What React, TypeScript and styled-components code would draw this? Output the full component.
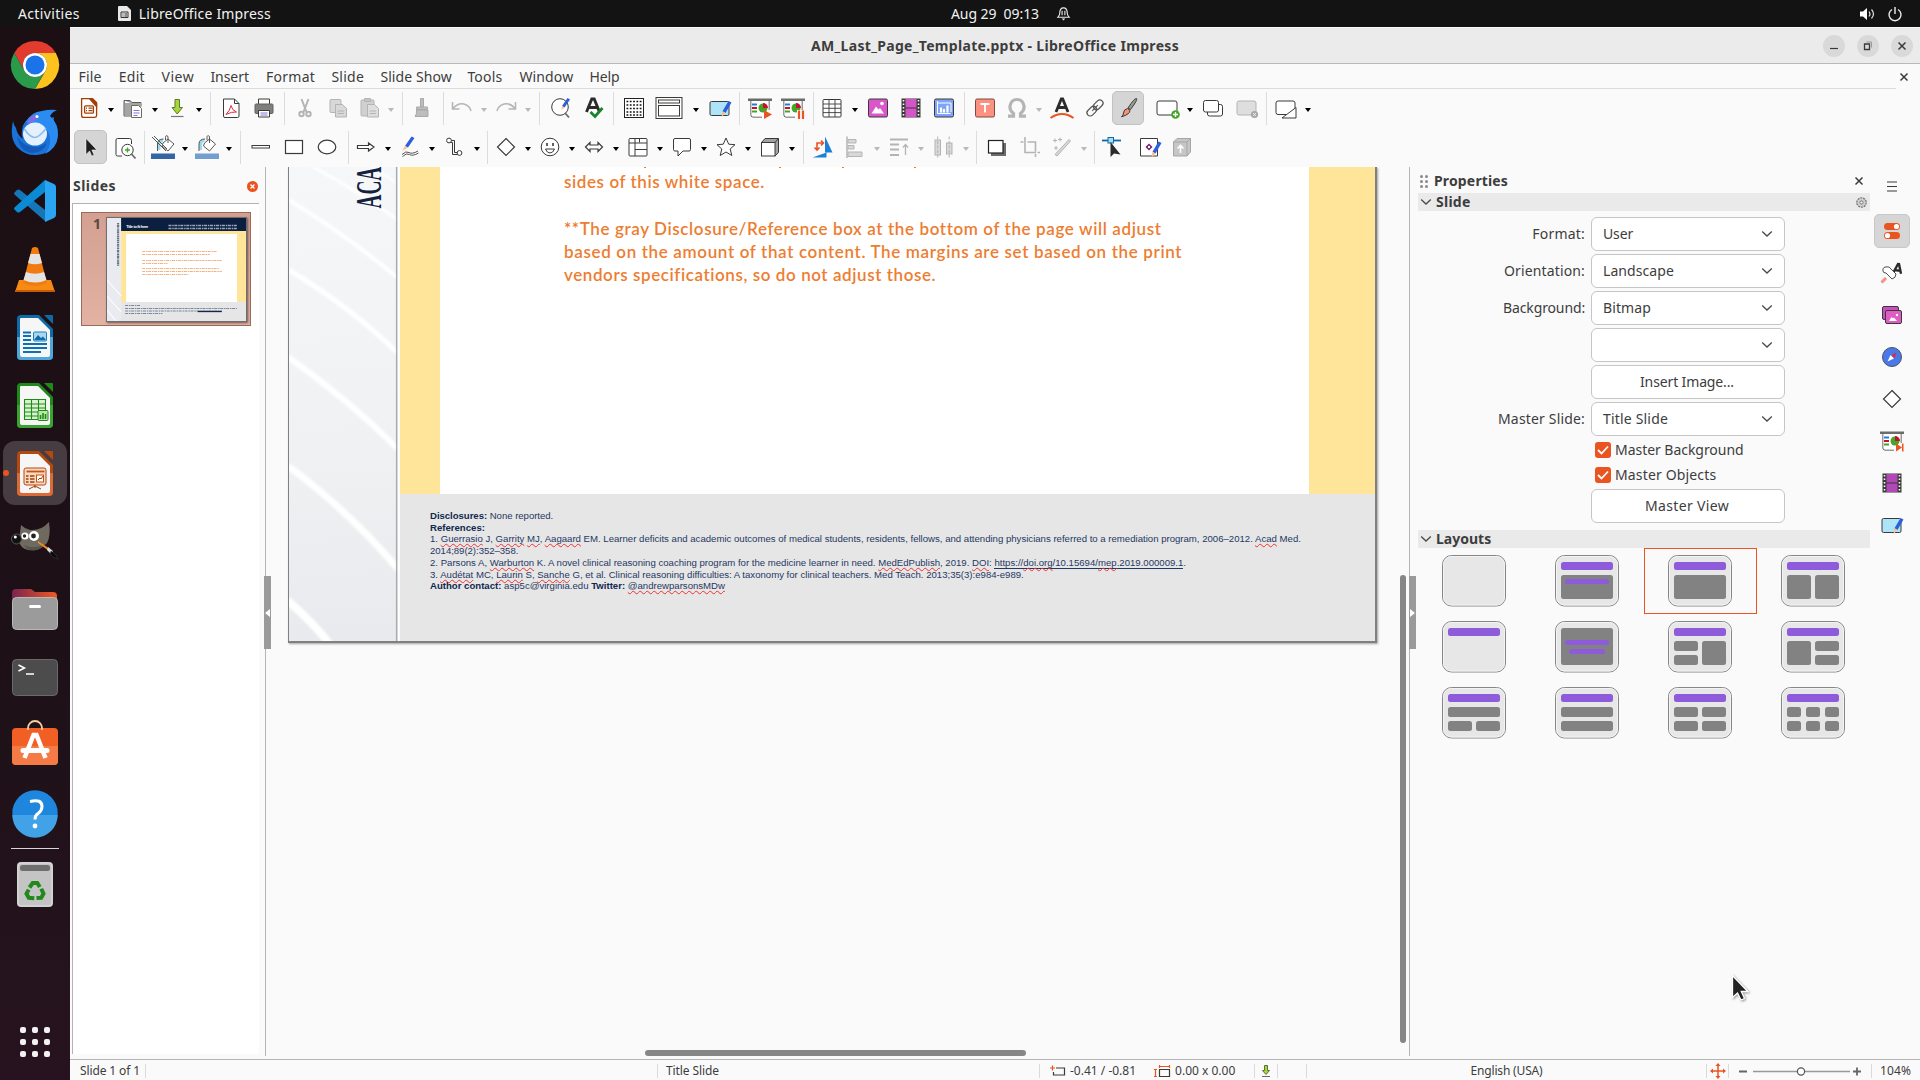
import React from "react";
import styled, { createGlobalStyle } from "styled-components";

const UI = `"Noto Sans", "Open Sans", sans-serif`;
const INK = "#3a3a38";
const DIM = "#b4b4b4";
const ORANGE = "#e95420";

const Global = createGlobalStyle`
  html, body { margin: 0; padding: 0; }
  body { background: #fafafa; overflow: hidden; }
  *, *::before, *::after { box-sizing: border-box; }
`;

/* ---------- shell ---------- */

const Screen = styled.div`
  width: 1920px;
  height: 1080px;
  display: flex;
  flex-direction: column;
  overflow: hidden;
  background: #fafafa;
  color: #3d3d3d;
  font: 14px/18px ${UI};
`;
const Text = styled.span<{ $ls?: number; $bold?: boolean }>`
  white-space: pre;
  letter-spacing: ${(p) => p.$ls ?? 0}px;
  font-weight: ${(p) => (p.$bold ? 700 : 400)};
`;
const Svg = styled.svg`
  display: block;
  flex: none;
  overflow: visible;
`;

const TopBar = styled.header`
  flex: none;
  height: 27px;
  display: grid;
  grid-template-columns: 1fr auto 1fr;
  align-items: center;
  background: #131313;
  color: #f2f2f2;
`;
const TopLeft = styled.div`
  display: flex;
  align-items: center;
  padding-left: 18px;
`;
const AppMark = styled.div`
  display: flex;
  align-items: center;
  gap: 8px;
  margin-left: 38px;
`;
const Clock = styled.div`
  display: flex;
  align-items: center;
  gap: 18px;
  padding-left: 101px;
`;
const Tray = styled.div`
  display: flex;
  justify-content: flex-end;
  align-items: center;
  gap: 13px;
  padding-right: 18px;
`;
const Desktop = styled.div`
  flex: 1;
  min-height: 0;
  display: flex;
`;

/* ---------- dock ---------- */

const Dock = styled.nav`
  flex: none;
  width: 70px;
  display: flex;
  flex-direction: column;
  align-items: center;
  padding-top: 6px;
  background: linear-gradient(180deg, #1b0f14 0%, #1d1117 60%, #27131f 100%);
`;
const DockSlot = styled.div<{ $active?: boolean; $lift?: number }>`
  position: relative;
  flex: none;
  width: 64px;
  height: 64px;
  margin-bottom: 4px;
  padding-bottom: ${(p) => (p.$lift ?? 0) * 2}px;
  display: flex;
  align-items: center;
  justify-content: center;
  border-radius: 12px;
  background: ${(p) => (p.$active ? "#463c41" : "transparent")};
`;
const RunningDot = styled.i`
  position: absolute;
  left: 0;
  top: 29px;
  width: 6px;
  height: 6px;
  border-radius: 50%;
  background: ${ORANGE};
`;
const DockRule = styled.div`
  width: 48px;
  height: 1px;
  margin: -1px 0 3px;
  background: #d8d4d6;
`;
const AppGrid = styled.div`
  margin-top: auto;
  margin-bottom: 23px;
  display: grid;
  grid-template-columns: repeat(3, 6px);
  gap: 6px;
`;
const AppDot = styled.i`
  width: 6px;
  height: 6px;
  border-radius: 2px;
  background: #f3f1f2;
`;

/* ---------- window chrome ---------- */

const Window = styled.main`
  flex: 1;
  min-width: 0;
  display: flex;
  flex-direction: column;
`;
const TitleBar = styled.div`
  flex: none;
  height: 37px;
  display: grid;
  grid-template-columns: 1fr auto 1fr;
  align-items: center;
  background: #ebebeb;
  border-top: 1px solid #f7f7f7;
  border-bottom: 1px solid #b9b9b9;
`;
const Controls = styled.div`
  grid-column: 3;
  display: flex;
  justify-content: flex-end;
  gap: 12px;
  padding-right: 7px;
`;
const Control = styled.span`
  width: 22px;
  height: 22px;
  border-radius: 50%;
  display: flex;
  align-items: center;
  justify-content: center;
  background: #d9d9d9;
`;
const MenuBar = styled.div`
  flex: none;
  height: 25px;
  display: flex;
  align-items: stretch;
`;
const Menus = styled.div`
  flex: 1;
  display: flex;
  align-items: center;
  padding: 2px 0 0 8.5px;
  border-bottom: 1px solid #dcdcdc;
`;
const MenuItem = styled.span<{ $w: number; $ls: number }>`
  width: ${(p) => p.$w}px;
  letter-spacing: ${(p) => p.$ls}px;
  white-space: nowrap;
`;
const DocClose = styled.span`
  width: 24px;
  display: flex;
  align-items: center;
  padding-left: 4px;
`;
const ToolRow = styled.div<{ $indent: number }>`
  flex: none;
  height: 39px;
  display: flex;
  align-items: center;
  padding: 0 0 1px ${(p) => p.$indent}px;
`;
const Tool = styled.span<{ $w: number; $on?: boolean }>`
  flex: none;
  width: ${(p) => p.$w}px;
  height: 34px;
  display: flex;
  align-items: center;
  justify-content: center;
  border-radius: 5px;
  border: 1px solid ${(p) => (p.$on ? "#c2c2c2" : "transparent")};
  background: ${(p) => (p.$on ? "#d5d5d5" : "transparent")};
`;
const Caret = styled.span<{ $w: number; $dim?: boolean }>`
  flex: none;
  width: ${(p) => p.$w}px;
  display: flex;
  justify-content: center;
  padding-top: 4px;
  &::after {
    content: "";
    border: 3.5px solid transparent;
    border-bottom-width: 0;
    border-top: 4px solid ${(p) => (p.$dim ? "#b9b9b9" : "#000")};
  }
`;
const Rule = styled.i<{ $a: number; $b: number }>`
  flex: none;
  width: 1px;
  height: 33px;
  margin: 0 ${(p) => p.$b}px 0 ${(p) => p.$a}px;
  background: #dcdcdc;
`;

/* ---------- workspace ---------- */

const Work = styled.div`
  flex: 1;
  min-height: 0;
  display: flex;
`;
const SlidePane = styled.section`
  flex: none;
  width: 195px;
  padding: 0 6px 5px 2px;
  display: flex;
  flex-direction: column;
`;
const PaneHead = styled.div`
  height: 36px;
  display: flex;
  align-items: center;
  justify-content: space-between;
  padding: 2px 1px 0 1px;
`;
const SlideList = styled.div`
  flex: 1;
  padding: 8px 8px;
  background: #fff;
  border-left: 1px solid #b3b3b3;
  border-top: 1px solid #b3b3b3;
`;
const Thumb = styled.div`
  width: 170px;
  height: 114px;
  display: flex;
  justify-content: space-between;
  padding: 4px 3px 0 11px;
  border: 1px solid #9a6a5c;
  background: linear-gradient(#d3a091, #e2b2a2);
`;
const ThumbNo = styled.b`
  width: 10px;
  font-size: 14px;
  line-height: 13px;
  color: #5a4742;
`;
const ThumbArt = styled.svg`
  width: 141px;
  height: 105px;
  border: 1px solid #6e6e6e;
  box-shadow: 1px 1px 2px rgba(0, 0, 0, 0.5);
`;
const Splitter = styled.div`
  position: relative;
  flex: none;
  width: 1px;
  margin-bottom: 3px;
  background: #b5b5b5;
`;
const Grip = styled.span<{ $x: number }>`
  position: absolute;
  z-index: 2;
  left: ${(p) => p.$x}px;
  top: 409px;
  width: 7px;
  height: 73px;
  display: flex;
  align-items: center;
  justify-content: center;
  background: #9a9a9a;
`;
const Canvas = styled.section`
  position: relative;
  flex: 1;
  min-width: 0;
  overflow: hidden;
`;
const Slide = styled.div`
  position: absolute;
  left: 22px;
  top: 0;
  width: 1089px;
  height: 476px;
  display: flex;
  background: #fff;
  border: solid #808080;
  border-width: 0 2px 2px 1px;
  box-shadow: 1px 1px 2px rgba(0, 0, 0, 0.35);
`;
const SideArt = styled.svg`
  display: block;
  flex: none;
  width: 111px;
  height: 474px;
`;
const SlideBody = styled.div`
  flex: 1;
  display: flex;
  flex-direction: column;
`;
const Middle = styled.div`
  height: 327px;
  display: flex;
  padding: 0 67px 0 40px;
  background: linear-gradient(90deg, #ffe599 40px, #fff 40px, #fff 909px, #ffe599 909px);
`;
const Copy = styled.div`
  padding: 1px 0 0 124px;
  display: flex;
  flex-direction: column;
  color: #ed7d31;
  font: 600 17px/23.3px Lato, sans-serif;
`;
const Stubs = styled.svg`
  display: block;
  height: 2px;
  width: 600px;
  margin-top: -1px;
  margin-bottom: 1px;
`;
const CopyLine = styled.p<{ $ls: number }>`
  margin: 0;
  min-height: 23.3px;
  white-space: nowrap;
  letter-spacing: ${(p) => p.$ls}px;
`;
const Foot = styled.div`
  flex: 1;
  padding: 15.8px 0 0 30px;
  background: #e6e6e6;
  color: #1f3864;
  font: 9.6px/11.7px "Liberation Sans", Arial, sans-serif;
`;
const FootLine = styled.p<{ $ls?: number }>`
  margin: 0;
  white-space: nowrap;
  letter-spacing: ${(p) => p.$ls ?? 0}px;
  b { color: #10284f; }
`;
const Typo = styled.span`
  text-decoration: underline wavy #f03030 0.6px;
  text-underline-offset: 1px;
  text-decoration-skip-ink: none;
`;
const Link = styled.span`
  border-bottom: 1px solid #1f3864;
  display: inline-block;
  line-height: 10px;
`;
const VBar = styled.i`
  position: absolute;
  right: 3px;
  top: 408px;
  width: 6px;
  height: 468px;
  border-radius: 3px;
  background: #868686;
`;
const HBar = styled.i`
  position: absolute;
  left: 379px;
  bottom: 3px;
  width: 381px;
  height: 6px;
  border-radius: 3px;
  background: #868686;
`;

/* ---------- sidebar ---------- */

const Sidebar = styled.aside`
  flex: none;
  width: 460px;
  padding: 5px 0 0 8px;
  display: flex;
  flex-direction: column;
`;
const DeckHead = styled.div`
  height: 21px;
  display: flex;
  align-items: center;
  padding: 0 7px 3px 2px;
`;
const DotGrid = styled.span`
  display: grid;
  grid-template-columns: 3px 3px;
  gap: 2px;
  margin-right: 6px;
  i {
    width: 3px;
    height: 3px;
    border-radius: 50%;
    background: #8a8a8a;
  }
`;
const Push = styled.span`
  margin-left: auto;
`;
const SectionHead = styled.div`
  flex: none;
  width: 452px;
  height: 18px;
  display: flex;
  align-items: center;
  gap: 4px;
  padding: 0 3px 0 2px;
  background: #eaeaea;
`;
const Form = styled.div`
  display: grid;
  grid-template-columns: 167px 194px;
  column-gap: 6px;
  row-gap: 3px;
  align-items: center;
  padding: 6px 0 7px;
`;
const FieldLabel = styled.span<{ $ls: number }>`
  text-align: right;
  letter-spacing: ${(p) => p.$ls}px;
`;
const Combo = styled.div`
  grid-column: 2;
  height: 34px;
  display: flex;
  align-items: center;
  justify-content: space-between;
  padding: 0 11px 0 11px;
  border: 1px solid #c6c6c6;
  border-radius: 6px;
  background: #fff;
`;
const Button = styled(Combo)`
  justify-content: center;
  padding-right: 13px;
`;
const Checks = styled.div`
  grid-column: 2;
  height: 47px;
  display: flex;
  flex-direction: column;
  justify-content: center;
  gap: 7px;
  padding: 0 0 0 4px;
`;
const Check = styled.div`
  display: flex;
  align-items: center;
  gap: 4px;
  height: 18px;
`;
const Box = styled.span`
  width: 16px;
  height: 16px;
  border-radius: 3px;
  display: flex;
  align-items: center;
  justify-content: center;
  background: ${ORANGE};
`;
const Layouts = styled.div`
  display: grid;
  grid-template-columns: repeat(4, 113px);
  grid-auto-rows: 66px;
`;
const LayoutCell = styled.div<{ $on?: boolean }>`
  display: flex;
  justify-content: center;
  padding: 6px 2px 0 0;
  border: 1px solid ${(p) => (p.$on ? ORANGE : "transparent")};
`;
const Tabs = styled.nav`
  flex: none;
  width: 50px;
  padding: 5px 6px 0 0;
  display: flex;
  flex-direction: column;
  align-items: center;
  gap: 8px;
`;
const Tab = styled.span<{ $on?: boolean }>`
  flex: none;
  width: 36px;
  height: 34px;
  display: flex;
  align-items: center;
  justify-content: center;
  border-radius: 5px;
  border: 1px solid ${(p) => (p.$on ? "#c8c8c8" : "transparent")};
  background: ${(p) => (p.$on ? "#d6d6d6" : "transparent")};
`;

/* ---------- status bar ---------- */

const Status = styled.footer`
  flex: none;
  height: 21px;
  display: flex;
  align-items: center;
  padding-top: 1px;
  border-top: 1px solid #b5b5b5;
  font-size: 12px;
`;
const Cell = styled.div<{ $w: number; $pl?: number; $center?: boolean; $gap?: number; $line?: boolean }>`
  flex: none;
  width: ${(p) => p.$w}px;
  height: 14px;
  display: flex;
  align-items: center;
  justify-content: ${(p) => (p.$center ? "center" : "flex-start")};
  gap: ${(p) => p.$gap ?? 0}px;
  padding-left: ${(p) => p.$pl ?? 0}px;
  border-right: 1px solid ${(p) => (p.$line === false ? "transparent" : "#dadada")};
`;
const Pointer = styled.svg`
  position: absolute;
  left: 1731px;
  top: 974px;
  filter: drop-shadow(1px 1px 1px rgba(0, 0, 0, 0.4));
`;

/* ---------- small glyphs ---------- */

const Cross = ({ s = 8, c = INK }: { s?: number; c?: string }) => (
  <Svg width={s} height={s} viewBox="0 0 8 8"><path d="M.5 .5l7 7M7.5 .5l-7 7" stroke={c} strokeWidth="1.5" /></Svg>
);
const Chevron = () => (
  <Svg width="12" height="8" viewBox="0 0 12 8"><path d="M1.2 1.5L6 6l4.800-4.500" fill="none" stroke="#4a4a4a" strokeWidth="1.300" /></Svg>
);
const Tick = () => (
  <Svg width="12" height="10" viewBox="0 0 12 10"><path d="M1 5l3.500 3.500L11 1.500" fill="none" stroke="#fff" strokeWidth="1.800" /></Svg>
);

const Pencil = () => (
  <>
    <path d="M20.500 5l3 1.500-6 10.500-3-1.700z" fill="#2c5fde" />
    <path d="M14.500 15.300l3 1.700-4 4.200z" fill="#fcc08a" />
  </>
);
const Board = () => (
  <>
    <path d="M3 5v14q0 2 2 2h9M21 5v9" fill="#fff" stroke={INK} />
    <path d="M3.500 5h17v15.500H5q-1.500 0-1.500-1.500z" fill="#fff" />
    <path d="M0 2.500h24v2.500H0z" fill="#6b6b6b" />
    <path d="M4 8.500h5" stroke="#1e7fd6" strokeWidth="2" />
    <path d="M4 12h5" stroke="#c8102e" strokeWidth="2" />
    <path d="M4 15.500h5" stroke="#43a628" strokeWidth="2" />
    <circle cx="15" cy="12" r="4.500" fill="#43a628" />
    <path d="M15 12V7a5 5 0 0 1 5 5z" fill="#c8102e" />
  </>
);
const Bucket = () => (
  <g fill="none" stroke="#565654">
    <path d="M12 8l5-4 6 5-6 7-6-5z" fill="#fff" />
    <path d="M17 8V1.500q-2.500-2-2.500 1V5" />
    <path d="M12 5.500q-4 0-4 4V15" stroke="#9ed8ea" strokeWidth="3" />
    <path d="M12.500 4q-6 0-6 5v7" />
  </g>
);

const icons: Record<string, React.ReactNode> = {
  fresh: (<g fill="none" stroke="#a33e03" strokeWidth="1.300"><path d="M4.600 2.600h10l5 5v12q0 1.800-1.800 1.800H6.400q-1.800 0-1.800-1.800z" fill="#fff" /><path d="M12.500 2.600h3l4 4v4z" fill="#a33e03" /><rect x="7.600" y="9.800" width="8.800" height="7.400" rx="1" /><path d="M9 12.200h1m1.500 0h4M9 14.600h1m1.500 0h4" /></g>),
  open: (<g><path d="M3 4.500h6l2 2h9v4M3 4.500V20h7" fill="#9b9b99" stroke="#5c5c5a" /><path d="M3.500 7H20v13H3.500z" fill="#a5a5a3" /><path d="M10.500 9.500h7l3 3v9h-10z" fill="#fff" stroke="#6a6a68" /><path d="M12.500 14.500h6m-6 2.500h6m-6 2.500h4" stroke="#8279d8" strokeWidth="1.100" /></g>),
  save: (<g><path d="M10 3.500h4.500v8h3L12.200 18 7 11.500h3z" fill="#a4d83a" stroke="#5f7a2a" /><path d="M6 20.500h12.500" stroke="#777" strokeWidth="1.200" /></g>),
  pdf: (<g fill="none"><path d="M4.500 3h11l4.500 4.500V20q0 1.500-1.500 1.500H6q-1.500 0-1.500-1.500z" fill="#fff" stroke={INK} /><path d="M15.500 3v4.500H20" stroke={INK} /><path d="M7 18.500q4-4 5-9 1 5 5.500 6.500-5-.5-10.500 2.500z" stroke="#e2283c" /></g>),
  print: (<g><path d="M6.500 8V3h11v5" fill="#fff" stroke={INK} /><rect x="3" y="8" width="18" height="9.500" rx="1" fill="#7f7f7d" stroke="#626260" /><path d="M6.500 14.500h11V21h-11z" fill="#fff" stroke={INK} /><path d="M8.500 17h7m-7 2h7" stroke="#8279d8" /></g>),
  cut: (<g fill="none" stroke={DIM} strokeWidth="2"><path d="M8.500 3l5 13M15.500 3l-5 13" /><circle cx="8.500" cy="18" r="2.200" /><circle cx="15.500" cy="18" r="2.200" /></g>),
  copy: (<g fill="#d8d8d8" stroke={DIM}><rect x="4" y="3.500" width="11" height="13" rx="1" /><path d="M9.500 8.500h7l4 4v8.500h-11z" /><path d="M11.500 15h6.500m-6.500 2.500h6.500" /></g>),
  paste: (<g fill="#d0d0d0" stroke={DIM}><rect x="3" y="4" width="13" height="16" rx="1" /><path d="M6.500 2.500h6v3h-6z" fill="#c4c4c4" /><path d="M9.500 8.500h7l4 4v8.500h-11z" fill="#dedede" /><path d="M11.500 15h6.500m-6.500 2.500h6.500" /></g>),
  clone: (<g fill="#bdbdbd" stroke="#a9a9a9"><path d="M10.500 2.500h3v8h-3z" /><path d="M6.500 11h11v2.500h-11z" /><path d="M6.500 14h11.500v6.500H5q2-2 1.500-6.500z" /></g>),
  undo: (<path d="M2.500 6v7h7M3 12.500Q8 6.500 14 8q6 2 7 7" fill="none" stroke={DIM} strokeWidth="1.500" />),
  redo: (<path d="M21.500 6v7h-7M21 12.500Q16 6.500 10 8q-6 2-7 7" fill="none" stroke={DIM} strokeWidth="1.500" />),
  find: (<g fill="none"><circle cx="11" cy="11" r="8.300" fill="#fff" stroke={INK} /><path d="M16 17l4 4.500" stroke="#6a6a68" strokeWidth="1.800" /><path d="M18.500 2l2.500 1.500-5.500 8-2.500-1.500z" fill="#2c5fde" /><path d="M13 10l2.500 1.500-3 2.500z" fill="#fcc08a" /></g>),
  spell: (<g fill="none"><path d="M4.500 16L9.800 3h2.400l5.300 13M6.500 11.500h9" stroke="#2b2b2a" strokeWidth="2.900" /><path d="M8.500 16l4.500 4.500L20.500 12" stroke="#15832c" strokeWidth="2.700" /></g>),
  grid: (<g><rect x="2.500" y="2.500" width="19" height="19" fill="#fff" stroke="#222" />{[5.500, 9, 12.500, 16, 19].map((y) => <path key={y} d={`M4.500 ${y}h15`} stroke="#111" strokeWidth="1.600" strokeDasharray="1.800 1.500" />)}</g>),
  views: (<g fill="#fff" stroke={INK}><rect x="-1" y="1.500" width="26" height="21" /><rect x="1.500" y="4" width="21" height="3" /><rect x="1.500" y="9.500" width="21" height="10.500" /></g>),
  master: (<g><rect x="2" y="5.500" width="19" height="14" rx="1.500" fill="#aee4f8" stroke={INK} /><Pencil /></g>),
  start: (<g><Board /><path d="M16 14l8 4.500-8 4.500z" fill={ORANGE} /></g>),
  startHere: (<g><Board /><path d="M16 14h7v9h-7z" fill="#fff" /><path d="M18 14.500V23M22 14.500V23" stroke={ORANGE} strokeWidth="2.200" /></g>),
  table: (<g fill="#fff" stroke={INK}><rect x="3" y="3.500" width="18" height="17.500" rx="1" /><path d="M3 8h18M3 12.300h18M3 16.600h18M9 3.500v17.500M15 3.500v17.500" fill="none" strokeWidth=".9" /></g>),
  image: (<g><rect x="2.500" y="3" width="19" height="18" rx="1.500" fill="#d957ca" stroke={INK} /><path d="M5.500 17.500l4.500-7 2.500 3 1.500-1.500 4 5.500z" fill="#fff" /><circle cx="16" cy="7.500" r="1.800" fill="#fff" /></g>),
  film: (<g><rect x="2.500" y="2.500" width="19" height="19" fill={INK} /><path d="M6.500 3h11v8.500h-11zM6.500 12.500h11V21h-11z" fill="#d455c8" /><path d="M4.500 4v17M19.500 4v17" stroke="#fff" strokeWidth="1.600" strokeDasharray="1.500 2" /></g>),
  reel: (<g><rect x="2.500" y="2.500" width="19" height="19" fill={INK} /><path d="M6.500 3h11v8.500h-11zM6.500 12.500h11V21h-11z" fill="#b248b8" /><path d="M4.500 4v17M19.500 4v17" stroke="#fff" strokeWidth="1.600" strokeDasharray="1.500 2" /></g>),
  chart: (<g><rect x="2.500" y="3" width="19" height="18" rx="1.500" fill="#7ea4f8" stroke={INK} /><path d="M5.500 5v12.500h13M5 7h14v9" fill="none" stroke="#fff" strokeWidth="1" /><path d="M9 16.500v-5M12 16.500V13M15.500 16.500V9.500" stroke="#fff" strokeWidth="2.200" /></g>),
  textbox: (<g><rect x="2.500" y="3" width="19" height="18" rx="1.500" fill="#fc9181" stroke="#7d4a43" /><path d="M7.500 8h9M12 8v8.500" stroke="#fff" strokeWidth="1.900" /></g>),
  omega: (<path d="M3 20.200h5.500v-2.700q-4-3-3.500-7.500 1-6.500 7-6.500t7 6.500q.5 4.500-3.500 7.500v2.700H21" fill="none" stroke={DIM} strokeWidth="3.200" />),
  fontwork: (<g fill="none"><path d="M6 16L11.300 3h1.400L18 16M8 11.500h8" stroke="#2b2b2a" strokeWidth="2.800" /><path d="M.5 22q11.500-8 23 0" stroke={ORANGE} strokeWidth="2" /></g>),
  link: (<g fill="none" stroke="#555553" strokeWidth="1.200" transform="rotate(-45 12 12)"><rect x="2" y="8.800" width="11" height="6.400" rx="3.200" /><rect x="11" y="8.800" width="11" height="6.400" rx="3.200" /><path d="M8 12h8" /></g>),
  brush: (<g><path d="M20.500 2.500q1.500 1-6 11l-2.500-1.500q6.500-10 8.500-9.500z" fill="#9b9b99" stroke={INK} /><path d="M11.500 12.500l2.500 1.800q0 4-8.500 6.500 2-1.500 2-3.800 0-3.500 4-4.500z" fill="#fb8f76" stroke={INK} /></g>),
  newSlide: (<g><rect x="1" y="5" width="20" height="14" rx="2" fill="#fff" stroke={INK} /><circle cx="19.500" cy="18.500" r="4.300" fill="#43a628" /><path d="M17 18.500h5M19.500 16v5" stroke="#fff" strokeWidth="1.300" /></g>),
  dup: (<g fill="#fff" stroke={INK}><rect x="6.500" y="8.500" width="15" height="11.500" rx="2" /><rect x="2.500" y="4.500" width="15" height="11.500" rx="2" /></g>),
  del: (<g><rect x="2" y="5" width="19" height="14" rx="2" fill="#dedede" stroke={DIM} /><circle cx="19.500" cy="18.500" r="3.600" fill="#a8a8a8" /><path d="M18.200 17.200l2.600 2.600m0-2.600l-2.600 2.600" stroke="#fff" /></g>),
  layout: (<g><rect x="2" y="5" width="19" height="13.500" rx="2" fill="#fff" stroke={INK} /><path d="M22 11.500V22H8z" fill="#fff" stroke={INK} /></g>),

  select: (<path d="M8 3.500v16l3.600-3.600 2.200 5 2.200-1-2.200-5h5z" fill="#1e1e1e" stroke="#fff" strokeWidth=".5" />),
  zoomer: (<g fill="none"><path d="M18.500 9V5.500q0-2-2-2h-12q-1.500 0-1.500 1.500v14.500q0 1.500 1.500 1.500H9" stroke={INK} fill="#fff" /><circle cx="14.500" cy="15" r="5.700" fill="#fff" stroke={INK} /><path d="M12 15h5M14.500 12.500v5" stroke="#43a628" strokeWidth="1.400" /><path d="M18.500 19l4 4.500" stroke="#6a6a68" strokeWidth="1.800" /></g>),
  lineColor: (<g><Bucket /><path d="M1 2l14 14M3 1l13 13" stroke="#565654" /><path d="M0 18.500h24V24H0z" fill="#3465a4" /></g>),
  fillColor: (<g><g transform="translate(-2.500 0)"><Bucket /></g><path d="M0 18.500h24V24H0z" fill="#729fcf" /></g>),
  line: (<rect x="3" y="10.500" width="17.500" height="2.500" fill="#fff" stroke={INK} />),
  rect: (<rect x="3.500" y="5.500" width="17" height="13" fill="#fff" stroke={INK} strokeWidth="1.200" />),
  ellipse: (<ellipse cx="12" cy="12" rx="8.800" ry="6.800" fill="#fff" stroke={INK} strokeWidth="1.200" />),
  arrow: (<path d="M3.500 10.500h11V8l5.500 4-5.500 4v-2.500h-11z" fill="#fff" stroke={INK} strokeWidth="1.200" />),
  scribble: (<g fill="none"><path d="M13.500 1.500l3 1.500-6.500 9.500-3-1.500z" fill="#2c5fde" /><path d="M7 11l3 1.500L4 16z" fill="#fcc08a" /><path d="M4 19.500q4-4 7-2t9-1.500M4.500 21.500q4-4 7-2t9-1.500" stroke="#565654" /></g>),
  connector: (<g fill="#fff" stroke={INK}><path d="M8 5.500h4.500v12H17M6 7.500h4.500v12H17" fill="none" /><circle cx="7" cy="5.500" r="2.400" /><circle cx="17.500" cy="18" r="2.400" /></g>),
  diamond: (<path d="M12 3.500l8.500 8.500-8.500 8.500L3.500 12z" fill="#fff" stroke={INK} strokeWidth="1.200" />),
  smiley: (<g fill="none" stroke={INK}><circle cx="12" cy="12" r="8.800" fill="#fff" /><path d="M9 8v3M15 8v3" strokeWidth="1.600" /><path d="M7.500 14h9q-1.500 4-4.500 4t-4.500-4z" /></g>),
  dblArrow: (<path d="M3.500 12L8 7.500V10h8V7.500l4.500 4.500-4.500 4.500V14H8v2.500z" fill="#fff" stroke={INK} strokeWidth="1.200" />),
  flow: (<g fill="#fff" stroke={INK}><rect x="3" y="3.500" width="18" height="17.500" rx="1" /><path d="M9 3.500v17.500M13.500 3.500v4M3 8h18M9 14.500h12" /></g>),
  callout: (<path d="M5 3.500h14q1.500 0 1.500 1.500v9.500q0 1.500-1.500 1.500h-6l-5 5v-5H5q-1.500 0-1.500-1.500V5q0-1.500 1.500-1.500z" fill="#fff" stroke={INK} />),
  star: (<path d="M12 3l2.700 6.200 6.300.5-4.800 4.300 1.600 6.500-5.800-3.500-5.800 3.500 1.600-6.500L3 9.700l6.300-.5z" fill="#fff" stroke={INK} />),
  cube: (<g stroke={INK}><path d="M3.500 7.500L7 3.500h13.500v14L17 21" fill="#a3a3a1" /><path d="M17 7.500l3.500-4" /><rect x="3.500" y="7.500" width="13.500" height="13.500" fill="#fff" /></g>),
  rotate: (<g fill="none"><path d="M14 1.500l7.500 16H14zM1.500 22.500l14-5v5z" fill="#1e7fd6" /><path d="M6 14.500V8h6M3.500 12.500L6 15l2.500-2.500M10 5.500L12.500 8 10 10.500" stroke={ORANGE} strokeWidth="1.600" /></g>),
  align: (<g fill="#d8d8d8" stroke={DIM}><path d="M4 1.500v21.500" strokeWidth="1.500" /><path d="M5 4.500h8v3.500H5zM5 10.500h6v3.500H5zM5 17h14v4.500H5z" /></g>),
  arrange: (<g stroke={DIM} strokeWidth="1.800" fill="none"><path d="M3 4.500h18M3 9.500h9M3 14.500h9M3 20h9" /><path d="M18.500 20V10M16 12.500l2.500-3 2.500 3" strokeWidth="1.300" /></g>),
  spread: (<g fill="#d8d8d8" stroke={DIM}><rect x="3" y="5" width="5.500" height="15" /><rect x="14.500" y="8" width="5.500" height="11" /><path d="M5.700 1.500V23M17.200 1.500V23" strokeDasharray="3 1.500" fill="none" /></g>),
  shadow: (<g><rect x="6" y="8" width="15" height="13" fill="#6b6b69" /><rect x="3.500" y="5.500" width="14.500" height="12.500" fill="#fff" stroke="#222" strokeWidth="1.200" /></g>),
  crop: (<path d="M7 2v15.500h11M2.500 7h3M9.500 7h8v9.500M17.500 19v3M19.500 17.500h2.500" fill="none" stroke={DIM} strokeWidth="1.600" />),
  wand: (<g fill="none" stroke={DIM}><path d="M19 4.500l1.500 1.500L7 21l-2-1.500z" fill="#d8d8d8" /><path d="M5 3.500v4M3 5.500h4M10 2.500v4M8 4.500h4M6 11v4M4 13h4" /></g>),
  points: (<g><path d="M1 5.500h19" stroke="#0f69a8" strokeWidth="1.800" /><rect x="7" y="2.500" width="5.500" height="5.500" fill="#a9def3" stroke="#0f69a8" /><path d="M9.500 7v15l3.500-3.500 6.500 1z" fill="#2b2b2a" /></g>),
  glue: (<g><path d="M3.500 3.500h17V21h-17z" fill="#fff" stroke={INK} /><path d="M12 8.500l3.500 3.500-3.500 3.500L8.500 12z" fill="#7a1d73" /><circle cx="12" cy="12" r="1.200" fill="#fff" /><g transform="translate(1 1.500)"><Pencil /></g></g>),
  extrude: (<g stroke="#a6a6a6"><path d="M3.500 7L7 3.500h13.500V17L17 21H3.500z" fill="#c6c6c6" /><path d="M3.500 7H17v14M17 7l3.500-3.500" fill="none" /><path d="M10.500 18v-7M7.500 13.500l3-3 3 3" fill="none" stroke="#fff" strokeWidth="1.600" /></g>),

  menu: (<path d="M7 5h10M7 9.500h10M7 14h10" stroke={INK} strokeWidth="1.200" />),
  props: (<g><rect x="4" y="4" width="16" height="7" rx="3.500" fill={ORANGE} /><rect x="4" y="13" width="16" height="7" rx="3.500" fill={ORANGE} /><circle cx="16.500" cy="7.500" r="2.600" fill="#fff" /><circle cx="7.500" cy="16.500" r="2.600" fill="#fff" /></g>),
  styles: (<g fill="none"><path d="M13.500 12.500L17.500 3h1L21.500 12.500M14.500 9.500h6" stroke="#2b2b2a" strokeWidth="2.400" transform="rotate(6 18 8)" /><path d="M3 11q-1-5 6-4l7 7q0 4-4 5l-6-6q-3 0-3-2z" fill="#fff" stroke={INK} strokeWidth=".9" transform="translate(0 -1)" /><path d="M6 17l-4.500 4.500" stroke="#fb8f86" strokeWidth="3" /></g>),
  gallery: (<g stroke={INK}><rect x="2.500" y="3.500" width="16" height="13" rx="1.500" fill="#c94ec0" /><rect x="5.500" y="7.500" width="16" height="13" rx="1.500" fill="#e05cc4" /><path d="M9 18l2.500-4 1.500 1.500 1-1 3 3.500z" fill="#fff" stroke="none" /><circle cx="17" cy="12" r="1.200" fill="#fff" stroke="none" /></g>),
  compass: (<g><circle cx="12" cy="12" r="9.500" fill="#4a78e8" stroke="#44546e" /><path d="M16.500 7.500l-2 6-3-3z" fill="#e2283c" /><path d="M7.500 16.500l3-6.500 3.500 3.500z" fill="#fff" /></g>),
  transition: (<g><Board /><path d="M16 14.500l6 4-6 4zM22 14.500h1.500v8H22z" fill={ORANGE} /></g>),
};

const Icon = ({ n }: { n: string }) => (
  <Svg width="24" height="24" viewBox="0 0 24 24">{icons[n]}</Svg>
);

/* A toolbar entry: [icon, width], ["v", width] for a drop-down caret, ["|", before, after] for a rule. */
type Entry = [string, number, (number | string)?];

const standardBar: Entry[] = [
  ["fresh", 33], ["v", 11], ["open", 33], ["v", 11], ["save", 33], ["v", 11], ["|", 5.500, 3.500],
  ["pdf", 33], ["print", 33], ["|", 3.500, 3],
  ["cut", 33], ["copy", 33], ["paste", 31], ["v", 12, "dim"], ["|", 4.500, 2.500],
  ["clone", 33], ["|", 4.500, 1.500],
  ["undo", 33], ["v", 12, "dim"], ["redo", 32], ["v", 12, "dim"], ["|", 5, 4],
  ["find", 33], ["spell", 34], ["|", 2, 3.500],
  ["grid", 33], ["views", 37.500], ["v", 15], ["master", 34], ["|", 2, 3],
  ["start", 34], ["startHere", 32], ["|", 4, 2],
  ["table", 32], ["v", 13.500], ["image", 33], ["film", 33], ["chart", 33], ["|", 3.500, 3.500],
  ["textbox", 33], ["omega", 30.500], ["v", 13, "dim"], ["fontwork", 34], ["link", 32.500], ["brush", 32.500, "on"], [" ", 7.500],
  ["newSlide", 33], ["v", 10], ["dup", 37], ["del", 30], ["|", 4.500, 3.500],
  ["layout", 30.500], ["v", 14],
];
const drawingBar: Entry[] = [
  ["select", 33, "on"], ["zoomer", 36], ["|", 1.500, 2],
  ["lineColor", 32.500], ["v", 11.500], ["fillColor", 32], ["v", 12.500], ["|", 4.500, 3.500],
  ["line", 33], ["rect", 33], ["ellipse", 33], ["|", 4, 1],
  ["arrow", 33], ["v", 11.500], ["scribble", 32], ["v", 12], ["connector", 32.500], ["v", 12], ["|", 4.500, 1.500],
  ["diamond", 33], ["v", 11], ["smiley", 33], ["v", 11], ["dblArrow", 33], ["v", 11], ["flow", 33], ["v", 11],
  ["callout", 33], ["v", 11], ["star", 33], ["v", 11], ["cube", 33], ["v", 11], ["|", 5.500, 3],
  ["rotate", 32], ["align", 32], ["v", 12, "dim"], ["arrange", 32], ["v", 12, "dim"], ["spread", 33], ["v", 11, "dim"], ["|", 5, 3.500],
  ["shadow", 33], ["crop", 33], ["wand", 31], ["v", 12, "dim"], ["|", 4.500, 1],
  ["points", 33], ["glue", 40], ["extrude", 25],
];

const ToolBar = ({ items, indent }: { items: Entry[]; indent: number }) => (
  <ToolRow $indent={indent}>
    {items.map(([n, w, x], i) =>
      n === "v" ? <Caret key={i} $w={w} $dim={x === "dim"} />
      : n === "|" ? <Rule key={i} $a={w} $b={Number(x)} />
      : <Tool key={i} $w={w} $on={x === "on"}><Icon n={n} /></Tool>
    )}
  </ToolRow>
);

const menus: [string, number, number][] = [
  ["File", 40.300, 0.200], ["Edit", 42.600, 0.230], ["View", 49, 0.590], ["Insert", 55.700, -0.040], ["Format", 65.300, 0.250],
  ["Slide", 49, 0.260], ["Slide Show", 87, 0.080], ["Tools", 52, 0.190], ["Window", 70, 0.150], ["Help", 40, -0.120],
];

/* ---------- dock artwork ---------- */

const Chrome = () => (
  <Svg width="48" height="48" viewBox="0 0 48 48">
    {[["#e33b2e", 0], ["#fcc31e", 120], ["#2a9a4b", 240]].map(([c, r]) => (
      <path key={c} fill={String(c)} transform={`rotate(${r} 24 24)`} d="M24 12H44.800A24 24 0 0 0 3.200 12L13.600 30A12 12 0 0 1 24 12z" />
    ))}
    <circle cx="24" cy="24" r="12" fill="#fff" /><circle cx="24" cy="24" r="9.500" fill="#1a73e8" />
  </Svg>
);
const Thunderbird = () => (
  <Svg width="48" height="48" viewBox="0 0 48 48">
    <path d="M2 12q-4 18 5 27 8 8 19 7 13-1 18-12 4-10 1-18-3-3-2-8-4 1-9 3L20 8q-8 4-9 13-1 5 1 9-6-4-7-11-2-2-3-7z" fill="#1973d8" />
    <path d="M15 13Q20 3 31 2q7-2 15-1-5 2-7 6 9 8 8 20-1 12-13 18 6-7 5-16-2-13-15-15-4-1-9-1z" fill="#2a8bf0" />
    <path d="M16 15q1-6 7-9 4-1 4 3-3 4-11 6z" fill="#7a6fe8" /><circle cx="26" cy="7.500" r="1.500" fill="#fff" />
    <ellipse cx="24" cy="25" rx="12" ry="11.500" fill="#e4f0fc" /><path d="M13 19.500q6 9 10.500 9T35 19.500" fill="none" stroke="#8cbcf0" strokeWidth="1.600" />
    <path d="M6 27q6 11 18 11 8 0 12-5-3 11-15 11Q9 43 6 27z" fill="#1259b8" />
  </Svg>
);
const Code = () => (
  <Svg width="42" height="42" viewBox="0 0 42 42">
    <path d="M0 13l3-3q1-1 3 0l25 20v11L1 15q-1-1-1-2z" fill="#1577b8" />
    <path d="M0 29l3 3q1 1 3 0l25-20V0L1 27q-1 1-1 2z" fill="#0b8bd4" />
    <path d="M31 0l9 4q2 1 2 3v28q0 2-2 3l-9 4z" fill="#2ba5f2" />
  </Svg>
);
const Vlc = () => (
  <Svg width="42" height="46" viewBox="0 0 42 46">
    <path d="M5 34h32l4 12H1z" fill="#f68a12" /><path d="M1 44h40v2H1z" fill="#c85a06" />
    <path d="M18 2q3-2 6 0l9 35q-12 6-24 0z" fill="#f07c10" />
    <path d="M16.500 8h9l2.500 9q-7 2.500-14 0zM12 26q9 3.500 18 0l2.500 8q-11 5-23 0z" fill="#e4e4e4" />
  </Svg>
);
const Office = ({ dark, light, children }: { dark: string; light: string; children: React.ReactNode }) => (
  <Svg width="36" height="45" viewBox="0 0 36 45">
    <path d="M4 0h18l14 14v27q0 4-4 4H4q-4 0-4-4V4q0-4 4-4z" fill={dark} />
    <path d="M0 22h36v19q0 4-4 4H4q-4 0-4-4z" fill={light} />
    <path d="M4 3h17l12 12v25q0 2-2 2H5q-2 0-2-2V4q0-1 1-1z" fill="#f6f6f6" />
    <path d="M27 0h8q1 0 1 1v8z" fill={dark} />{children}
  </Svg>
);
const Writer = () => (
  <Office dark="#0f6ba6" light="#4fa6d8">
    <path d="M6 17.500h8M6 21h8M6 25h8M6 29h24M6 33h24M6 37h18" stroke="#0b72b8" strokeWidth="1.800" />
    <rect x="16.500" y="17" width="13" height="9" rx="1" fill="#a8d8f0" stroke="#1a80bf" /><path d="M17 25l4-5 3 3 2-1.500 3 3.500z" fill="#0f6ba6" />
  </Office>
);
const Calc = () => (
  <Office dark="#1f8a1a" light="#3aa332">
    <path d="M7.500 16.500h21v20h-21zM7.500 21h21M7.500 25h21M7.500 29h21M7.500 33h21M14.500 16.500v20M21.500 16.500v20" fill="#d9f2cf" stroke="#1f8a1a" strokeWidth="1.100" />
    <rect x="21" y="27.500" width="10" height="10" rx="1" fill="#b9e8a5" stroke="#1f8a1a" /><path d="M23.500 36v-4M26 36v-6M28.500 36v-5" stroke="#1f8a1a" strokeWidth="1.600" />
  </Office>
);
const Impress = () => (
  <Office dark="#b5480f" light="#dc6a34">
    <rect x="7" y="17" width="22" height="17" rx="2" fill="#f9d9c4" stroke="#b5480f" /><path d="M9.500 20.500h18" stroke="#c8520f" strokeWidth="1.800" />
    <path d="M9 25h2.500m1.500 0h4.500M9 28h2.500m1.500 0h4.500M9 31h2.500m1.500 0h4.500" stroke="#a33e03" strokeWidth="1.500" />
    <rect x="19.500" y="24" width="7" height="7" fill="#fff" stroke="#c8520f" /><path d="M21 29l2-2 1 1 2-3M18 34v3M12 38l6-3 6 3" fill="none" stroke="#a33e03" />
  </Office>
);
const Gimp = () => (
  <Svg width="46" height="38" viewBox="0 0 46 38">
    <path d="M9 4q4 4 9 5 11 1 19-8 2 14-2 21-8 9-19 7-8-2-9-9 1-8 2-16z" fill="#6f6a60" />
    <path d="M12 24q9 5 22-1-7 8-16 6-4-1-6-5z" fill="#57534b" />
    <circle cx="4.500" cy="18" r="5" fill="#111" stroke="#555" /><circle cx="3.300" cy="16" r="1.500" fill="#fff" />
    <circle cx="13" cy="15" r="3.600" fill="#fff" /><circle cx="22" cy="15" r="5" fill="#fff" />
    <circle cx="12.500" cy="15" r="1.700" fill="#222" /><circle cx="21.500" cy="15" r="2.400" fill="#222" />
    <path d="M26 20l12 8-1 2-11-8z" fill="#f08a24" /><path d="M36 26l5 4-2 3-4-4z" fill="#ddd" /><path d="M39 30q6 3 7 8-6-1-8-5z" fill="#0a0a0a" stroke="#444" strokeWidth=".5" />
  </Svg>
);
const Files = () => (
  <Svg width="46" height="42" viewBox="0 0 46 42">
    <defs><linearGradient id="tab"><stop offset="0" stopColor="#7a2350" /><stop offset="1" stopColor="#ee5a22" /></linearGradient></defs>
    <path d="M4 1h15l4 3h18q4 0 4 4v8H0V5q0-4 4-4z" fill="url(#tab)" />
    <rect x=".5" y="9.500" width="45" height="32" rx="4" fill="#9b9b9b" stroke="#b8b8b8" /><rect x="17" y="17" width="12" height="3" rx="1.500" fill="#fff" />
  </Svg>
);
const Terminal = () => (
  <Svg width="46" height="37" viewBox="0 0 46 37">
    <rect x=".5" y=".5" width="45" height="36" rx="4" fill="#4c4c4c" stroke="#6a6a6a" />
    <path d="M6.500 6l6 3-6 3M14 15h8" fill="none" stroke="#fff" strokeWidth="1.500" />
  </Svg>
);
const Software = () => (
  <Svg width="46" height="44" viewBox="0 0 46 44">
    <rect y="7" width="46" height="37" rx="4" fill="#f15f25" /><path d="M0 25h46v15q0 4-4 4H4q-4 0-4-4z" fill="#f47b46" />
    <path d="M16 9V7a7 7 0 0 1 14 0v2" fill="none" stroke="#f6cfa0" strokeWidth="1.800" />
    <path d="M12.500 37L21.500 14h3L33.500 37" fill="none" stroke="#fff" strokeWidth="4.500" /><rect x="8.500" y="27" width="29" height="5" rx="2.500" fill="#fff" />
  </Svg>
);
const HelpMark = () => (
  <Svg width="46" height="46" viewBox="0 0 46 46">
    <circle cx="23" cy="23" r="22.700" fill="#1e86dd" /><path d="M.3 25a22.700 22.700 0 0 0 45.400 0z" fill="#41a2e8" />
    <path d="M18 11.500q12-3 12 5 0 4-4 7-3 2-3 6" fill="none" stroke="#fff" strokeWidth="3" /><circle cx="23" cy="36" r="2.400" fill="#fff" />
  </Svg>
);
const Trash = () => (
  <Svg width="36" height="45" viewBox="0 0 36 45">
    <rect width="36" height="45" rx="4" fill="#c9c9c9" /><rect x="1" y="1" width="34" height="43" rx="3.500" fill="#c4c4c4" stroke="#dedede" />
    <rect x="3" y="3" width="30" height="6" rx="2.500" fill="#6e6e6e" />
    <g fill="none" stroke="#21891c" strokeWidth="4">{[0, 120, 240].map((r) => <path key={r} transform={`rotate(${r} 18 29.500)`} d="M12.500 25.500l3.200-4.500h4.600l2.500 4" />)}</g>
  </Svg>
);
/* artwork, lift in px above the slot's centre, running */
const dock: [React.FC, number, boolean?][] = [
  [Chrome, 0], [Thunderbird, 0], [Code, 0], [Vlc, 0], [Writer, 0], [Calc, 0], [Impress, 0, true], [Gimp, 1], [Files, 0], [Terminal, 0], [Software, 2], [HelpMark, 0],
];

/* ---------- slide layouts: [x, y, w, h, accent] ---------- */

type Block = [number, number, number, number, boolean?];
const title: Block = [6, 7, 52, 8, true];
const layoutArt: Block[][] = [
  [],
  [title, [6, 20, 52, 24], [10, 24, 44, 5, true]],
  [title, [6, 20, 52, 24]],
  [title, [6, 20, 24, 24], [34, 20, 24, 24]],
  [title],
  [[6, 7, 52, 37], [10, 19, 44, 5, true], [14, 28, 36, 5, true]],
  [title, [6, 20, 24, 10], [6, 34, 24, 10], [34, 20, 24, 24]],
  [title, [6, 20, 24, 24], [34, 20, 24, 10], [34, 34, 24, 10]],
  [title, [6, 20, 52, 10], [6, 34, 24, 10], [34, 34, 24, 10]],
  [title, [6, 20, 52, 10], [6, 34, 52, 10]],
  [title, [6, 20, 24, 10], [34, 20, 24, 10], [6, 34, 24, 10], [34, 34, 24, 10]],
  [title, [6, 20, 14, 10], [25, 20, 14, 10], [44, 20, 14, 10], [6, 34, 14, 10], [25, 34, 14, 10], [44, 34, 14, 10]],
];

const MiniSlide = () => (
  <ThumbArt viewBox="0 0 138 103" preserveAspectRatio="none">
    <rect width="138" height="103" fill="#fff" />
    <rect x="14" width="124" height="86" fill="#ffe599" /><rect x="19" y="16" width="110" height="68" fill="#fff" />
    <rect width="14" height="103" fill="#e9ebf0" />
    <path d="M0 62l14 16M0 78l14 16M0 92l9 11" stroke="#fff" />
    <path d="M11 5v43" stroke="#6a7288" strokeWidth="2.200" strokeDasharray="1.500 .6 2 .5 1 .6" />
    <rect x="14" width="124" height="13" fill="#0b1f40" />
    <text x="19" y="10" fill="#fff" fontFamily="Liberation Sans" fontSize="4" fontWeight="bold" textLength="22">Title to fit here</text>
    <path d="M61 7.500h68M61 10.500h68" stroke="#9aa6ba" strokeWidth="1.500" strokeDasharray="3 .8 1.500 .6" />
    <path d="M35 33.500h74M35 36.500h67M35 42.500h79M35 45.500h25M35 50.500h76M35 53.500h79M35 56.500h46" stroke="#f4b183" strokeWidth="1.100" strokeDasharray="3 .8 1.500 .6" />
    <rect x="14" y="84" width="124" height="19" fill="#e6e6e6" />
    <path d="M18 87.500h15M18 90.500h111M18 93h96M18 95.500h37" stroke="#7a869c" strokeDasharray="3 .8 1.500 .6" /><path d="M90 93.500h24" stroke="#14264a" strokeWidth="1.300" />
  </ThumbArt>
);

const orangeLines: [string, number][] = [
  ["sides of this white space.", 0.58], ["", 0],
  ["**The gray Disclosure/Reference box at the bottom of the page will adjust", 0.617],
  ["based on the amount of that content. The margins are set based on the print", 0.65],
  ["vendors specifications, so do not adjust those.", 0.58],
];

const StatusIcon = ({ w, children }: { w: number; children: React.ReactNode }) => (
  <Svg width={w} height="12" viewBox={`0 0 ${w} 12`}>{children}</Svg>
);

export default function App() {
  return (
    <Screen>
      <Global />
      <TopBar>
        <TopLeft>
          <Text $ls={0.35}>Activities</Text>
          <AppMark>
            <Svg width="13" height="15" viewBox="0 0 13 15"><path d="M1 0h8l4 4v10q0 1-1 1H1q-1 0-1-1V1q0-1 1-1z" fill="#e8e8e8" /><path d="M3 6h7v5.500H3zM4.500 8h1m1 0h2.500M4.500 10h1m1 0h2.500" fill="none" stroke="#333" /></Svg>
            <Text $ls={0.18}>LibreOffice Impress</Text>
          </AppMark>
        </TopLeft>
        <Clock>
          <Text $ls={-0.07}>Aug 29  09:13</Text>
          <Svg width="13" height="15" viewBox="0 0 14 15"><path d="M1 11.500q2-2 2-4.500 0-5.500 4-5.500t4 5.500q0 2.500 2 4.500zM5.500 4.500v5M8.500 4.500v5" fill="none" stroke="#eee" strokeWidth="1.200" /><path d="M5 13h4l-2 2z" fill="#eee" /></Svg>
        </Clock>
        <Tray>
          <Svg width="15" height="14" viewBox="0 0 15 14"><path d="M0 4.500h3L7 1v12L3 9.500H0z" fill="#fff" /><path d="M9 4.500q2 2.500 0 5M11.500 2.500q4 4.500 0 9" fill="none" stroke="#ddd" strokeWidth="1.200" /></Svg>
          <Svg width="14" height="14" viewBox="0 0 14 14"><path d="M4 2.500a6 6 0 1 0 6 0M7 0v7" fill="none" stroke="#eee" strokeWidth="1.400" /></Svg>
        </Tray>
      </TopBar>

      <Desktop>
        <Dock>
          {dock.map(([Art, lift, on], i) => (
            <DockSlot key={i} $active={on} $lift={lift}>{on && <RunningDot />}<Art /></DockSlot>
          ))}
          <DockRule />
          <DockSlot><Trash /></DockSlot>
          <AppGrid>{Array.from({ length: 9 }, (_, i) => <AppDot key={i} />)}</AppGrid>
        </Dock>

        <Window>
          <TitleBar>
            <span />
            <Text $bold $ls={0.31}>AM_Last_Page_Template.pptx - LibreOffice Impress</Text>
            <Controls>
              <Control><Svg width="10" height="10" viewBox="0 0 10 10"><path d="M1 7.500h8" stroke={INK} strokeWidth="1.200" /></Svg></Control>
              <Control><Svg width="10" height="10" viewBox="0 0 10 10"><path d="M1.500 3h5v5.500h-5z" fill="none" stroke={INK} strokeWidth="1.300" /><path d="M3.500 1h5v5.500" fill="none" stroke="#999" /></Svg></Control>
              <Control><Cross /></Control>
            </Controls>
          </TitleBar>
          <MenuBar>
            <Menus>{menus.map(([t, w, ls]) => <MenuItem key={t} $w={w} $ls={ls}>{t}</MenuItem>)}</Menus>
            <DocClose><Cross /></DocClose>
          </MenuBar>
          <ToolBar items={standardBar} indent={2.500} />
          <ToolBar items={drawingBar} indent={3.500} />

          <Work>
            <SlidePane>
              <PaneHead>
                <Text $bold $ls={0.45}>Slides</Text>
                <Svg width="11" height="11" viewBox="0 0 11 11"><circle cx="5.500" cy="5.500" r="5.500" fill={ORANGE} /><path d="M3.500 3.500l4 4m0-4l-4 4" stroke="#fff" strokeWidth="1.200" /></Svg>
              </PaneHead>
              <SlideList>
                <Thumb><ThumbNo>1</ThumbNo><MiniSlide /></Thumb>
              </SlideList>
            </SlidePane>
            <Splitter>
              <Grip $x={-1}><Svg width="5" height="8" viewBox="0 0 5 8"><path d="M5 0v8L0 4z" fill="#fff" /></Svg></Grip>
            </Splitter>

            <Canvas>
              <Slide>
                <SideArt viewBox="0 0 111 474">
                  <defs>
                    <linearGradient id="side" gradientUnits="userSpaceOnUse" x1="0" y1="0" x2="20" y2="474"><stop offset="0" stopColor="#f5f7f8" /><stop offset=".6" stopColor="#f0f1f3" /><stop offset="1" stopColor="#e9eaed" /></linearGradient>
                    <filter id="soft"><feGaussianBlur stdDeviation=".8" /></filter>
                  </defs>
                  <rect width="111" height="474" fill="url(#side)" />
                  <g fill="none" stroke="#fff" filter="url(#soft)">
                    <path d="M24 0Q66 22 109 53" strokeWidth="3" /><path d="M84 0l25 17" strokeWidth="2" />
                    <path d="M0 33Q60 70 109 111" strokeWidth="4" /><path d="M0 103Q60 139 109 186" strokeWidth="5" />
                    <path d="M-1 190Q60 233 109 282" strokeWidth="6" /><path d="M-1 299Q60 344 110 403" strokeWidth="7" />
                    <path d="M-2 433Q24 455 43 480" strokeWidth="8" />
                  </g>
                  <text transform="translate(91.500 41.500) rotate(-90) scale(.55 1)" fontFamily="Liberation Serif" fontWeight="bold" fontSize="35" fill="#14213f">ACADEMIC</text>
                  <path d="M107.700 0v474" stroke="#a9abb0" strokeWidth="1.600" /><path d="M109.800 0v474" stroke="#fff" strokeWidth="2" />
                </SideArt>
                <SlideBody>
                  <Middle>
                    <Copy>
                      <Stubs viewBox="0 0 600 2"><path d="M80 0h2M215 0h2M278 0h2M350 0h2" stroke="#ed7d31" strokeWidth="2" /></Stubs>
                      {orangeLines.map(([t, ls], i) => <CopyLine key={i} $ls={ls}>{t}</CopyLine>)}
                    </Copy>
                  </Middle>
                  <Foot>
                    <FootLine $ls={-0.04}><b>Disclosures:</b> None reported.</FootLine>
                    <FootLine><b>References:</b></FootLine>
                    <FootLine>1. <Typo>Guerrasio</Typo> J, <Typo>Garrity</Typo> <Typo>MJ</Typo>, <Typo>Aagaard</Typo> EM. Learner deficits and academic outcomes of medical students, residents, fellows, and attending physicians referred to a remediation program, 2006–2012. <Typo>Acad</Typo> Med.</FootLine>
                    <FootLine $ls={-0.04}>2014;89(2):352–358.</FootLine>
                    <FootLine>2. Parsons A, <Typo>Warburton</Typo> K. A novel clinical reasoning coaching program for the medicine learner in need. <Typo>MedEdPublish</Typo>, 2019. <Typo>DOI</Typo>: <Link>https://<Typo>doi.org</Typo>/10.15694/<Typo>mep</Typo>.2019.000009.1</Link>.</FootLine>
                    <FootLine>3. <Typo>Audétat</Typo> MC, <Typo>Laurin</Typo> S, <Typo>Sanche</Typo> G, et al. Clinical reasoning difficulties: A taxonomy for clinical teachers. Med Teach. 2013;35(3):e984-e989.</FootLine>
                    <FootLine><b>Author contact:</b> asp5c@virginia.edu <b>Twitter:</b> <Typo>@andrewparsonsMDw</Typo></FootLine>
                  </Foot>
                </SlideBody>
              </Slide>
              <VBar />
              <HBar />
            </Canvas>

            <Splitter>
              <Grip $x={0}><Svg width="5" height="8" viewBox="0 0 5 8"><path d="M0 0v8l5-4z" fill="#fff" /></Svg></Grip>
            </Splitter>
            <Sidebar>
              <DeckHead>
                <DotGrid><i /><i /><i /><i /><i /><i /></DotGrid>
                <Text $bold $ls={0.15}>Properties</Text>
                <Push><Cross /></Push>
              </DeckHead>
              <SectionHead>
                <Chevron /><Text $bold $ls={0.26}>Slide</Text>
                <Push><Svg width="11" height="11" viewBox="0 0 11 11"><circle cx="5.500" cy="5.500" r="4.700" fill="#d0d0d0" stroke="#777" strokeDasharray="2 .9" strokeWidth="1.300" /><circle cx="5.500" cy="5.500" r="1.600" fill="#eee" stroke="#777" /></Svg></Push>
              </SectionHead>
              <Form>
                <FieldLabel $ls={0.2}>Format:</FieldLabel><Combo><Text $ls={-0.15}>User</Text><Chevron /></Combo>
                <FieldLabel $ls={0.14}>Orientation:</FieldLabel><Combo><Text $ls={0.08}>Landscape</Text><Chevron /></Combo>
                <FieldLabel $ls={-0.13}>Background:</FieldLabel><Combo><Text $ls={0.11}>Bitmap</Text><Chevron /></Combo>
                <Combo><span /><Chevron /></Combo>
                <Button><Text $ls={-0.13}>Insert Image...</Text></Button>
                <FieldLabel $ls={0.17}>Master Slide:</FieldLabel><Combo><Text $ls={0.18}>Title Slide</Text><Chevron /></Combo>
                <Checks>
                  <Check><Box><Tick /></Box><Text $ls={-0.04}>Master Background</Text></Check>
                  <Check><Box><Tick /></Box><Text $ls={0.15}>Master Objects</Text></Check>
                </Checks>
                <Button><Text $ls={0.34}>Master View</Text></Button>
              </Form>
              <SectionHead><Chevron /><Text $bold>Layouts</Text></SectionHead>
              <Layouts>
                {layoutArt.map((blocks, i) => (
                  <LayoutCell key={i} $on={i === 2}>
                    <Svg width="64" height="52" viewBox="0 0 64 52">
                      <rect x=".5" y=".5" width="63" height="50.500" rx="9" fill="#e7e7e7" stroke="#868686" />
                      <rect x="1.500" y="1.500" width="61" height="48.500" rx="8" fill="none" stroke="#f3f3f3" />
                      {blocks.map(([x, y, w, h, accent], k) => (
                        <rect key={k} x={x} y={y} width={w} height={h} rx={2.500} fill={accent ? "#8e5bdb" : "#828282"} />
                      ))}
                    </Svg>
                  </LayoutCell>
                ))}
              </Layouts>
            </Sidebar>
            <Tabs>
              {["menu", "props", "styles", "gallery", "compass", "diamond", "transition", "reel", "master"].map((n) => (
                <Tab key={n} $on={n === "props"}><Icon n={n} /></Tab>
              ))}
            </Tabs>
          </Work>

          <Status>
            <Cell $w={76} $pl={10}><Text $ls={-0.12}>Slide 1 of 1</Text></Cell>
            <Cell $w={512} />
            <Cell $w={382} $pl={8}><Text $ls={-0.09}>Title Slide</Text></Cell>
            <Cell $w={215} $pl={10} $gap={5}>
              <StatusIcon w={15}><path d="M6 3h8.500v7H3.500V7" fill="none" stroke={INK} strokeWidth="1.200" /><path d="M0 3h5M2.500 .5v5" stroke={ORANGE} strokeWidth="1.200" /></StatusIcon>
              <Text>-0.41 / -0.81</Text>
              <span />
              <StatusIcon w={24}><path d="M13.500 4.500h10v7h-10z" fill="none" stroke={INK} strokeWidth="1.200" /><path d="M13.500 1.500h10M13.500 0v3M23.500 0v3M9.500 4.500v7M8 4.500h3M8 11.500h3" stroke={ORANGE} strokeWidth="1.200" /></StatusIcon>
              <Text>0.00 x 0.00</Text>
            </Cell>
            <Cell $w={23} $center><StatusIcon w={10}><path d="M3.500 .5h3v5h2L5 9.500 1.500 5.500h2z" fill="#a4d83a" stroke="#5f6f3a" /><path d="M1 11.500h8" stroke="#666" /></StatusIcon></Cell>
            <Cell $w={29} />
            <Cell $w={400} $center><Text $ls={-0.17}>English (USA)</Text></Cell>
            <Cell $w={22} $center><StatusIcon w={14}><path d="M7-1v14M0 6h14" stroke={ORANGE} strokeWidth="1.500" /><path d="M7-2l2.500 3h-5zM7 14l2.500-3h-5zM-1 6l3-2.500v5zM15 6l-3-2.500v5z" fill={ORANGE} /></StatusIcon></Cell>
            <Cell $w={143} $pl={10}>
              <Svg width="122" height="12" viewBox="0 0 122 12">
                <path d="M0 6h8M118 2v8M114 6h8" stroke="#666" strokeWidth="1.800" transform="translate(0 .5)" />
                <path d="M14 6.500h97" stroke="#999" strokeWidth="1.500" /><circle cx="62" cy="6.500" r="3.600" fill="#fff" stroke="#555" strokeWidth="1.200" />
              </Svg>
            </Cell>
            <Cell $w={46} $pl={8} $line={false}><Text $ls={0.1}>104%</Text></Cell>
          </Status>
        </Window>
      </Desktop>
      <Pointer width="18" height="28" viewBox="0 0 18 28"><path d="M1.500 1.500v22l5-4.500 3.500 7 3.500-1.500-3.200-7h6.500z" fill="#222" stroke="#fff" strokeWidth="1.300" /></Pointer>
    </Screen>
  );
}
